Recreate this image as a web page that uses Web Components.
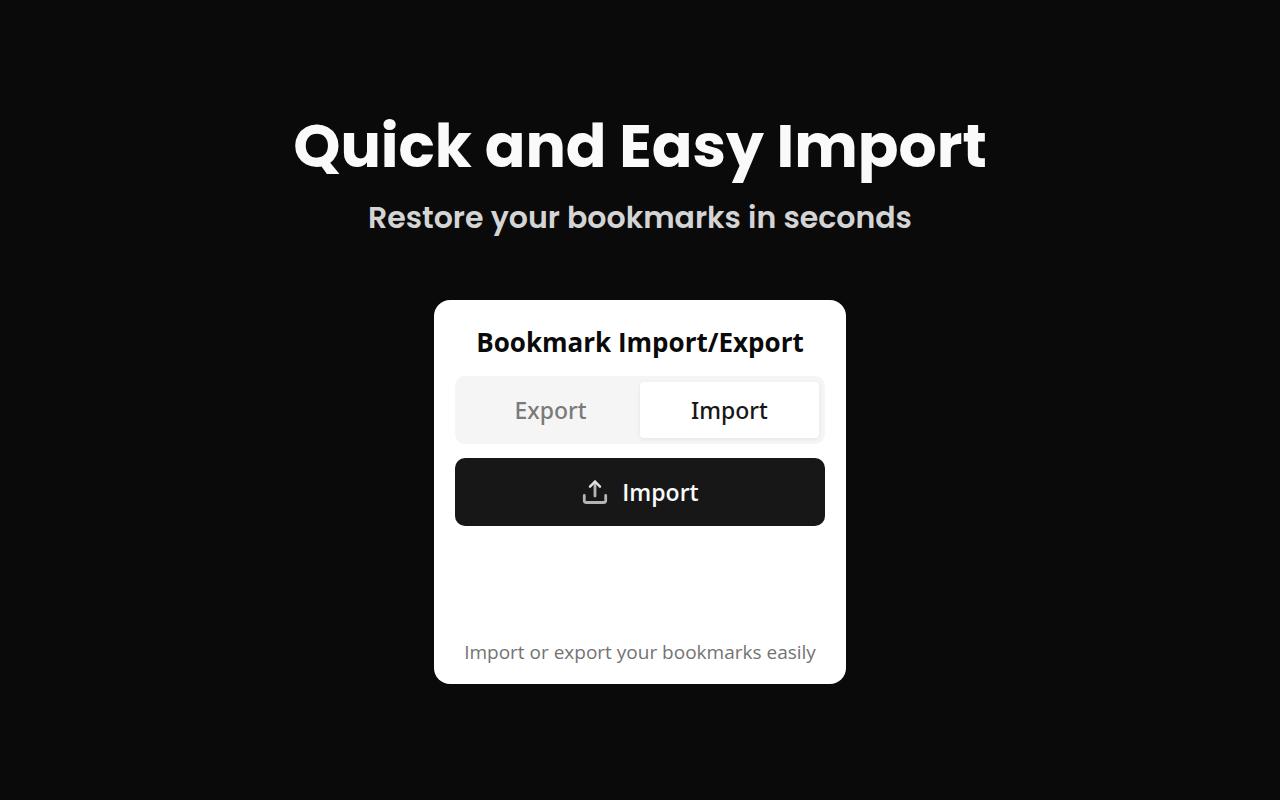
<!DOCTYPE html>
<html lang="en">
<head>
<meta charset="utf-8">
<title>Quick and Easy Import</title>
<style>
  body { margin: 0; background: #0a0a0a; }
</style>
</head>
<body>
<promo-page>
  <promo-heading>
    <span slot="title">Quick and Easy Import</span>
    <span slot="subtitle">Restore your bookmarks in seconds</span>
  </promo-heading>
  <bookmark-card>
    <span slot="title">Bookmark Import/Export</span>
    <tab-switch></tab-switch>
    <import-button>Import</import-button>
    <span slot="footer">Import or export your bookmarks easily</span>
  </bookmark-card>
</promo-page>

<script>
const define = (name, html, setup) => {
  const template = document.createElement('template');
  template.innerHTML = html;
  customElements.define(name, class extends HTMLElement {
    constructor() {
      super();
      this.attachShadow({ mode: 'open' }).append(template.content.cloneNode(true));
      if (setup) setup(this.shadowRoot);
    }
  });
};

define('promo-page', `
  <style>
    :host { display: block; }
    main {
      box-sizing: border-box; min-height: 100vh; padding: 24px;
      display: flex; flex-direction: column; align-items: center; justify-content: center; gap: 56px;
      background: #0a0a0a;
    }
  </style>
  <main><slot></slot></main>`);

define('promo-heading', `
  <style>
    :host { display: block; text-align: center; font-family: Poppins, Inter, sans-serif; }
    h1 { margin: 0 0 16px; font-size: 60px; line-height: 60px; font-weight: 700; color: #fafafa; }
    p { margin: 0; font-size: 30px; line-height: 52px; font-weight: 600; color: #d4d4d4; }
  </style>
  <h1><slot name="title"></slot></h1>
  <p><slot name="subtitle"></slot></p>`);

define('bookmark-card', `
  <style>
    :host { display: block; width: 100%; max-width: 412px; font-family: "Segoe UI", "Open Sans", sans-serif; }
    section {
      box-sizing: border-box; min-height: 384px; padding: 24px 21px 16px;
      display: flex; flex-direction: column; gap: 14px;
      background: #fff; border-radius: 16px;
    }
    h2 { margin: 0 0 2px; font-size: 26px; line-height: 36px; font-weight: 700; text-align: center; color: #0a0a0a; }
    p { margin: auto 0 0; font-size: 19px; line-height: 32px; text-align: center; color: #737373; }
  </style>
  <section>
    <h2><slot name="title"></slot></h2>
    <slot></slot>
    <p><slot name="footer"></slot></p>
  </section>`);

define('tab-switch', `
  <style>
    :host { display: block; }
    div {
      display: grid; grid-template-columns: 1fr 1fr;
      padding: 6px; background: #f5f5f5; border-radius: 10px;
    }
    button {
      height: 56px; border: 0; padding: 0; border-radius: 4px; background: none;
      font: 500 23px/32px "Segoe UI", "Noto Sans", sans-serif; color: #7a7a7a; cursor: pointer;
    }
    button[aria-selected="true"] { background: #fff; color: #171717; box-shadow: 0 1px 4px rgba(0, 0, 0, .07); }
  </style>
  <div role="tablist" aria-label="Mode">
    <button role="tab" aria-selected="false">Export</button>
    <button role="tab" aria-selected="true">Import</button>
  </div>`, root => {
  const tabs = root.querySelectorAll('button');
  tabs.forEach(tab => tab.addEventListener('click', () =>
    tabs.forEach(t => t.setAttribute('aria-selected', String(t === tab)))));
});

define('import-button', `
  <style>
    :host { display: block; }
    button {
      width: 100%; height: 68px; border: 0; border-radius: 10px; padding: 0;
      display: flex; align-items: center; justify-content: center; gap: 13px;
      background: #171717; color: #fafafa; cursor: pointer;
      font: 600 23px/32px "Segoe UI", "Open Sans", sans-serif;
    }
    svg { width: 28px; height: 28px; }
  </style>
  <button type="button">
    <svg viewBox="0 0 28 28" fill="none" stroke="#b4b4b4" stroke-width="2.8" stroke-linecap="round" stroke-linejoin="round" aria-hidden="true">
      <path d="M3.300 17.500v5a2 2 0 0 0 2 2h17.400a2 2 0 0 0 2-2v-5"/>
      <path d="M14 18V4"/>
      <path d="M9 8.700 14 3.500l5 5.200" stroke="#e0e0e0" stroke-width="2.500"/>
    </svg>
    <slot></slot>
  </button>`);
</script>
</body>
</html>
